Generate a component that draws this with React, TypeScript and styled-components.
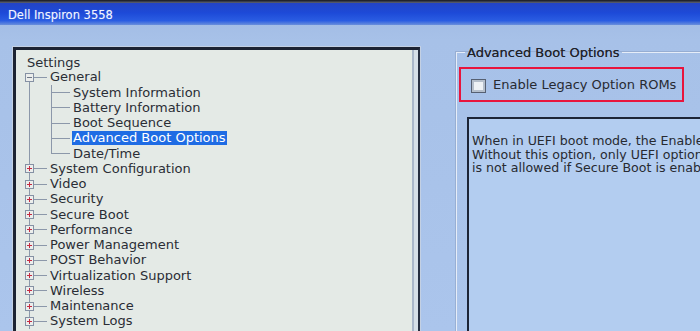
import React from "react";
import styled, { createGlobalStyle } from "styled-components";

const Global = createGlobalStyle`
  html, body { margin: 0; padding: 0; background: #a8c2e8; }
  * { box-sizing: border-box; }
`;

const Screen = styled.div`
  width: 700px;
  height: 331px;
  overflow: hidden;
  display: flex;
  flex-direction: column;
  background: linear-gradient(to bottom, #9fb9e2 0px, #a7c1e8 40px, #abc5ec 100%);
  font-family: "DejaVu Sans", Verdana, sans-serif;
  color: #2a2d35;
`;

const TopStrip = styled.div`
  height: 3px;
  flex: none;
  background: linear-gradient(to bottom, #15161c, #5d6478);
`;

const TitleBar = styled.div`
  height: 22px;
  flex: none;
  display: flex;
  align-items: center;
  padding: 2px 0 0 8px;
  background: linear-gradient(to bottom, #2344c4 0%, #1d4ad8 45%, #2a5de2 80%, #6a8fdc 100%);
  color: #f2f5ff;
  font-size: 11.5px;
  text-shadow: 0 0 1px rgba(255, 255, 255, 0.35);
`;

const Body = styled.div`
  flex: 1;
  min-height: 0;
  display: flex;
  align-items: flex-start;
  gap: 36px;
  padding: 22px 0 0 13px;
  overflow: hidden;
`;

const LeftPanel = styled.div`
  flex: none;
  width: 407px;
  height: 300px;
  background: #e4eae6;
  border-top: 3px solid #1c2333;
  border-left: 3px solid #1c2333;
  border-right: 2px solid #252d40;
  box-shadow: 0 0 0 1px #c3d0e3, inset -4px 0 0 #d6dfe8, inset -6px 0 0 #aab7ca;
  padding-top: 4.5px;
`;

const Heading = styled.div`
  height: 15.25px;
  line-height: 15.25px;
  font-size: 13px;
  padding-left: 11px;
`;

const Tree = styled.div`
  padding-left: 9px;
  background: linear-gradient(#8c98aa, #8c98aa) 13px 7.6px / 1px 100% no-repeat;
`;

const Row = styled.div`
  height: 15.25px;
  display: flex;
  align-items: center;
  font-size: 13px;
`;

const Expander = styled.span<{ $open?: boolean }>`
  flex: none;
  width: 9px;
  height: 9px;
  border: 1px solid #8591a4;
  background: ${(p) =>
    p.$open
      ? "linear-gradient(#6e7888,#6e7888) center / 5px 1px no-repeat, #eceeec"
      : "linear-gradient(#c42a42,#c42a42) center / 5px 1px no-repeat, linear-gradient(#c42a42,#c42a42) center / 1px 5px no-repeat, #eceeec"};
`;

const HLine = styled.span`
  flex: none;
  width: 13px;
  height: 1px;
  background: #8c98aa;
`;

const Label = styled.span<{ $selected?: boolean }>`
  margin-left: 2px;
  padding: 0 1px;
  line-height: 14px;
  white-space: nowrap;
  background: ${(p) => (p.$selected ? "#1f6ce4" : "transparent")};
  color: ${(p) => (p.$selected ? "#ffffff" : "inherit")};
`;

const Children = styled.div`
  padding-left: 26px;
`;

const Connector = styled.span<{ $last?: boolean }>`
  flex: none;
  width: 19px;
  align-self: stretch;
  background:
    linear-gradient(#8c98aa, #8c98aa) left top / 1px ${(p) => (p.$last ? "50%" : "100%")} no-repeat,
    linear-gradient(#8c98aa, #8c98aa) left center / 100% 1px no-repeat;
`;

const Group = styled.fieldset`
  flex: 1;
  min-width: 0;
  margin: -2px -30px 0 0;
  padding: 0;
  height: 320px;
  border: 1px solid #e6edf8;
  box-shadow: 0 0 0 1px rgba(120, 138, 170, 0.35);
`;

const Legend = styled.legend`
  margin-left: 8px;
  padding: 0 2px;
  font-size: 13px;
  line-height: 15px;
  color: #1f2229;
  text-shadow: 0 0 0.6px rgba(0, 0, 0, 0.6);
`;

const Highlight = styled.div`
  width: 225px;
  height: 35px;
  margin: 7px 0 0 2px;
  border: 2px solid #e8143c;
  display: flex;
  align-items: center;
  padding-left: 10px;
  gap: 7px;
`;

const CheckBox = styled.span`
  flex: none;
  width: 15px;
  height: 14px;
  margin-top: 2px;
  border: 1px solid #566072;
  box-shadow: inset 0 0 0 2px #b5bfcc;
  background: #eef2f6;
`;

const CheckText = styled.span`
  font-size: 13px;
  white-space: nowrap;
  color: #272a31;
`;

const HelpBox = styled.div`
  width: 320px;
  height: 260px;
  margin: 15px 0 0 10px;
  border-top: 2px solid #1c2436;
  border-left: 2px solid #1c2436;
  background: #b3cdf0;
  padding: 15px 0 0 3px;
  overflow: hidden;
`;

const HelpLine = styled.div`
  font-size: 12.6px;
  line-height: 13.6px;
  white-space: nowrap;
  color: #272a31;
`;

const topItems = [
  "System Configuration",
  "Video",
  "Security",
  "Secure Boot",
  "Performance",
  "Power Management",
  "POST Behavior",
  "Virtualization Support",
  "Wireless",
  "Maintenance",
  "System Logs",
];

const generalItems = [
  "System Information",
  "Battery Information",
  "Boot Sequence",
  "Advanced Boot Options",
  "Date/Time",
];

export default function App() {
  return (
    <>
      <Global />
      <Screen>
        <TopStrip />
        <TitleBar>Dell Inspiron 3558</TitleBar>
        <Body>
          <LeftPanel>
            <Heading>Settings</Heading>
            <Tree>
              <Row>
                <Expander $open />
                <HLine />
                <Label>General</Label>
              </Row>
              <Children>
                {generalItems.map((item, i) => (
                  <Row key={item}>
                    <Connector $last={i === generalItems.length - 1} />
                    <Label $selected={item === "Advanced Boot Options"}>{item}</Label>
                  </Row>
                ))}
              </Children>
              {topItems.map((item) => (
                <Row key={item}>
                  <Expander />
                  <HLine />
                  <Label>{item}</Label>
                </Row>
              ))}
            </Tree>
          </LeftPanel>
          <Group>
            <Legend>Advanced Boot Options</Legend>
            <Highlight>
              <CheckBox />
              <CheckText>Enable Legacy Option ROMs</CheckText>
            </Highlight>
            <HelpBox>
              <HelpLine>When in UEFI boot mode, the Enable Legacy Option ROMs option will allow</HelpLine>
              <HelpLine>Without this option, only UEFI option ROMs will load. This option</HelpLine>
              <HelpLine>is not allowed if Secure Boot is enabled.</HelpLine>
            </HelpBox>
          </Group>
        </Body>
      </Screen>
    </>
  );
}
